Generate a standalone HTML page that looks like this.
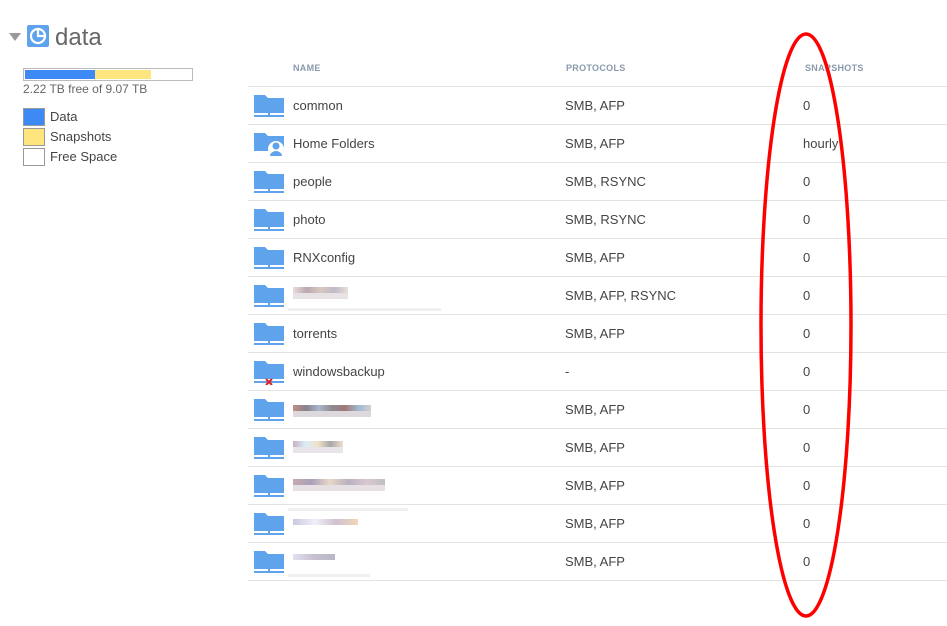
<!DOCTYPE html>
<html><head><style>
body{margin:0;width:947px;height:626px;background:#fff;font-family:"Liberation Sans",sans-serif;position:relative;overflow:hidden;color:#444}
.abs{position:absolute}
.row{position:absolute;left:248px;width:699px;height:37px;border-bottom:1px solid #e3e3e3;font-size:13px;color:#444}
.row span{position:absolute;top:11px}
.n{left:45px}.p{left:317px}.s{left:555px}
.row svg{position:absolute;left:6px;top:6px}
.hd{position:absolute;top:63px;font-size:9px;font-weight:bold;color:#8a9aac;letter-spacing:.3px}
.blur{position:absolute;height:6px}
</style></head><body>
<div class="abs" style="left:9px;top:33px;width:0;height:0;border-left:6px solid transparent;border-right:6px solid transparent;border-top:8px solid #999"></div>
<div class="abs" style="left:27px;top:25px;width:22px;height:22px;background:#5ea3ec;border-radius:2px"></div>
<svg class="abs" style="left:27px;top:25px" width="22" height="22"><circle cx="11" cy="11" r="7" fill="none" stroke="#fff" stroke-width="2.2"/><path d="M11 4V11H18" fill="none" stroke="#fff" stroke-width="2.2"/></svg>
<div class="abs" style="left:55px;top:24px;font-size:24px;color:#666">data</div>
<div class="abs" style="left:23px;top:68px;width:168px;height:11px;border:1px solid #bbb"></div>
<div class="abs" style="left:25px;top:70px;width:70px;height:9px;background:#3d8af7"></div>
<div class="abs" style="left:95px;top:70px;width:56px;height:9px;background:#fee57e"></div>
<div class="abs" style="left:23px;top:82px;font-size:12px;color:#666">2.22 TB free of 9.07 TB</div>
<div class="abs" style="left:23px;top:108px;width:20px;height:16px;border:1px solid #999;background:#3d8af7"></div>
<div class="abs" style="left:23px;top:128px;width:20px;height:16px;border:1px solid #999;background:#fee57e"></div>
<div class="abs" style="left:23px;top:148px;width:20px;height:16px;border:1px solid #999;background:#fff"></div>
<div class="abs" style="left:50px;top:109px;font-size:13px;color:#444">Data</div>
<div class="abs" style="left:50px;top:129px;font-size:13px;color:#444">Snapshots</div>
<div class="abs" style="left:50px;top:149px;font-size:13px;color:#444">Free Space</div>
<div class="hd" style="left:293px">NAME</div>
<div class="hd" style="left:566px">PROTOCOLS</div>
<div class="hd" style="left:805px">SNAPSHOTS</div>
<div class="abs" style="left:248px;top:86px;width:699px;border-top:1px solid #e3e3e3"></div>
<div class="row" style="top:87px"><svg width="32" height="26"><path d="M0 2h11l3 3h16v15H0z" fill="#5ea3ec"/><path d="M0 23h30M15 20v3" stroke="#5ea3ec" stroke-width="2"/></svg><span class="n">common</span><span class="p">SMB, AFP</span><span class="s">0</span></div>
<div class="row" style="top:125px"><svg width="32" height="26"><path d="M0 2h11l3 3h16v15H0z" fill="#5ea3ec"/><circle cx="22" cy="18" r="8" fill="#fff"/><circle cx="22" cy="15" r="3.5" fill="#5ea3ec"/><path d="M16 25a6 5 0 0 1 12 0z" fill="#5ea3ec"/></svg><span class="n">Home Folders</span><span class="p">SMB, AFP</span><span class="s">hourly</span></div>
<div class="row" style="top:163px"><svg width="32" height="26"><path d="M0 2h11l3 3h16v15H0z" fill="#5ea3ec"/><path d="M0 23h30M15 20v3" stroke="#5ea3ec" stroke-width="2"/></svg><span class="n">people</span><span class="p">SMB, RSYNC</span><span class="s">0</span></div>
<div class="row" style="top:201px"><svg width="32" height="26"><path d="M0 2h11l3 3h16v15H0z" fill="#5ea3ec"/><path d="M0 23h30M15 20v3" stroke="#5ea3ec" stroke-width="2"/></svg><span class="n">photo</span><span class="p">SMB, RSYNC</span><span class="s">0</span></div>
<div class="row" style="top:239px"><svg width="32" height="26"><path d="M0 2h11l3 3h16v15H0z" fill="#5ea3ec"/><path d="M0 23h30M15 20v3" stroke="#5ea3ec" stroke-width="2"/></svg><span class="n">RNXconfig</span><span class="p">SMB, AFP</span><span class="s">0</span></div>
<div class="row" style="top:277px"><svg width="32" height="26"><path d="M0 2h11l3 3h16v15H0z" fill="#5ea3ec"/><path d="M0 23h30M15 20v3" stroke="#5ea3ec" stroke-width="2"/></svg><div class="blur" style="left:45px;top:10px;width:55px;background:linear-gradient(90deg,#e8dcd8,#b8a8b0,#d8c8c0,#c0b8c8,#e8e0d8)"></div><div class="blur" style="left:45px;top:16px;width:55px;background:#e6e2e6"></div><div class="blur" style="left:40px;top:31px;width:153px;height:3px;background:#f0f0f0"></div><span class="p">SMB, AFP, RSYNC</span><span class="s">0</span></div>
<div class="row" style="top:315px"><svg width="32" height="26"><path d="M0 2h11l3 3h16v15H0z" fill="#5ea3ec"/><path d="M0 23h30M15 20v3" stroke="#5ea3ec" stroke-width="2"/></svg><span class="n">torrents</span><span class="p">SMB, AFP</span><span class="s">0</span></div>
<div class="row" style="top:353px"><svg width="32" height="26"><path d="M0 2h11l3 3h16v15H0z" fill="#5ea3ec"/><path d="M0 23h30" stroke="#5ea3ec" stroke-width="2"/><path d="M12 20l6 6M18 20l-6 6" stroke="#e02020" stroke-width="2"/></svg><span class="n">windowsbackup</span><span class="p">-</span><span class="s">0</span></div>
<div class="row" style="top:391px"><svg width="32" height="26"><path d="M0 2h11l3 3h16v15H0z" fill="#5ea3ec"/><path d="M0 23h30M15 20v3" stroke="#5ea3ec" stroke-width="2"/></svg><div class="blur" style="left:45px;top:14px;width:78px;background:linear-gradient(90deg,#c09080,#8a7f90,#a8b8c8,#908890,#a07878,#a0b8d0,#d0d0d0)"></div><div class="blur" style="left:45px;top:20px;width:78px;background:#ddd8dc"></div><span class="p">SMB, AFP</span><span class="s">0</span></div>
<div class="row" style="top:429px"><svg width="32" height="26"><path d="M0 2h11l3 3h16v15H0z" fill="#5ea3ec"/><path d="M0 23h30M15 20v3" stroke="#5ea3ec" stroke-width="2"/></svg><div class="blur" style="left:45px;top:12px;width:50px;background:linear-gradient(90deg,#c8b0c0,#d8eef8,#f0e0c8,#a8a8a8,#f0e0d0)"></div><div class="blur" style="left:45px;top:18px;width:50px;background:#e8e4ea"></div><span class="p">SMB, AFP</span><span class="s">0</span></div>
<div class="row" style="top:467px"><svg width="32" height="26"><path d="M0 2h11l3 3h16v15H0z" fill="#5ea3ec"/><path d="M0 23h30M15 20v3" stroke="#5ea3ec" stroke-width="2"/></svg><div class="blur" style="left:45px;top:12px;width:92px;background:linear-gradient(90deg,#c8a8b0,#a8a0b8,#e8d8c8,#b8b0c0,#d8c8d0,#c0c0c0)"></div><div class="blur" style="left:45px;top:18px;width:92px;background:#e6e0e4"></div><span class="p">SMB, AFP</span><span class="s">0</span></div>
<div class="row" style="top:505px"><svg width="32" height="26"><path d="M0 2h11l3 3h16v15H0z" fill="#5ea3ec"/><path d="M0 23h30M15 20v3" stroke="#5ea3ec" stroke-width="2"/></svg><div class="blur" style="left:40px;top:3px;width:120px;height:3px;background:#f0f0f0"></div><div class="blur" style="left:45px;top:14px;width:65px;background:linear-gradient(90deg,#c8c8e0,#f0f0f8,#d0c0d0,#f0d8b8)"></div><span class="p">SMB, AFP</span><span class="s">0</span></div>
<div class="row" style="top:543px"><svg width="32" height="26"><path d="M0 2h11l3 3h16v15H0z" fill="#5ea3ec"/><path d="M0 23h30M15 20v3" stroke="#5ea3ec" stroke-width="2"/></svg><div class="blur" style="left:45px;top:11px;width:42px;background:linear-gradient(90deg,#e0e0f0,#c8c0d0,#b8b8c8)"></div><div class="blur" style="left:40px;top:31px;width:82px;height:3px;background:#f0f0f0"></div><span class="p">SMB, AFP</span><span class="s">0</span></div>
<svg class="abs" style="left:0;top:0" width="947" height="626"><ellipse cx="806" cy="325" rx="45" ry="291" fill="none" stroke="#f00" stroke-width="3.5"/></svg>
</body></html>
